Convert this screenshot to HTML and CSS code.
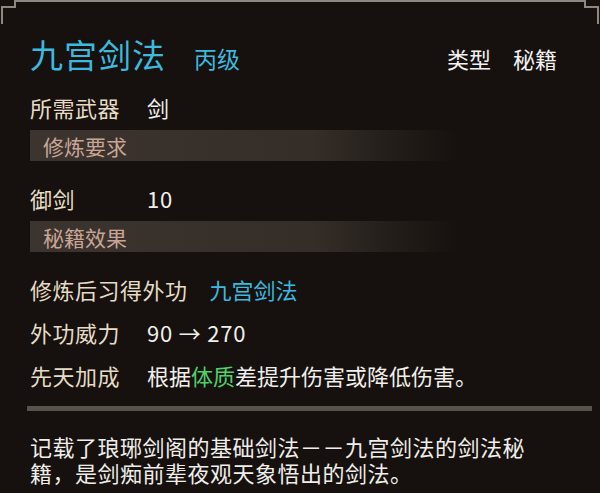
FILE: index.html
```html
<html lang="zh-CN">
<head>
    <meta charset="UTF-8">
    <meta name="viewport" content="width=device-width, initial-scale=1.0">
    <title>九宫剑法</title>
    <link rel="stylesheet" href="styles.css">
</head>
<body>
    <div class="tip">
        <svg class="corner corner-left" width="24" height="26" viewBox="0 0 24 26">
            <path d="M2 24 V7 H15 V1 H24" fill="none" stroke="#8d8780" stroke-width="2"/>
        </svg>
        <svg class="corner corner-right" width="24" height="26" viewBox="0 0 24 26">
            <path d="M0 1 H9 V7 H22 V24" fill="none" stroke="#8d8780" stroke-width="2"/>
        </svg>

        <div class="head">
            <span class="name">九宫剑法</span>
            <span class="grade">丙级</span>
            <span class="kind">类型<span class="gap"></span>秘籍</span>
        </div>

        <div class="row">
            <span class="label">所需武器</span>
            <span class="value">剑</span>
        </div>

        <div class="bar">修炼要求</div>
        <div class="row">
            <span class="label">御剑</span>
            <span class="value num">10</span>
        </div>

        <div class="bar">秘籍效果</div>
        <div class="row">
            <span class="label">修炼后习得外功</span>
            <span class="value skill">九宫剑法</span>
        </div>
        <div class="row">
            <span class="label">外功威力</span>
            <span class="value num">90 → 270</span>
        </div>
        <div class="row">
            <span class="label">先天加成</span>
            <span class="value">根据<span class="attr">体质</span>差提升伤害或降低伤害。</span>
        </div>

        <div class="divider"></div>

        <div class="desc">
            <div class="line">记载了琅琊剑阁的基础剑法－－九宫剑法的剑法秘</div>
            <div class="line">籍，是剑痴前辈夜观天象悟出的剑法。</div>
        </div>
    </div>
</body>
</html>
```

FILE: styles.css
```css
body {
    margin: 0;
    background-color: #16110e;
    font-family: "Noto Sans CJK SC", "DejaVu Sans", sans-serif;
    overflow: hidden;
}
.tip {
    position: relative;
    height: 493px;
    padding: 30px 0 0 30px;
    box-sizing: border-box;
    background-color: #16110e;
}
.tip::before {
    content: "";
    position: absolute;
    top: 0;
    left: 22px;
    right: 22px;
    height: 2px;
    background-color: #8d8780;
}
.corner {
    position: absolute;
    top: 0;
}
.corner-left {
    left: 0;
}
.corner-right {
    right: 0;
}

.head {
    display: flex;
    align-items: baseline;
    height: 52px;
    margin-bottom: 3px;
    padding-right: 43px;
}
.name {
    font-size: 33px;
    color: #3cb9de;
    letter-spacing: 1px;
}
.grade {
    font-size: 23px;
    color: #3cb9de;
    margin-left: 28px;
}
.kind {
    margin-left: auto;
    font-size: 22px;
    color: #f2f2f2;
}
.gap {
    display: inline-block;
    width: 22px;
}

.row {
    display: flex;
    align-items: center;
    height: 43px;
    font-size: 22px;
}
.label {
    color: #e6dcc6;
    min-width: 117px;
    letter-spacing: 0.5px;
}
.value {
    color: #f0efec;
}
.num {
    letter-spacing: 0.8px;
}
.skill {
    margin-left: 22px;
    color: #3cb9de;
}
.attr {
    color: #4fd06a;
}

.bar {
    display: flex;
    align-items: center;
    height: 31px;
    margin: 2px 0 15px;
    padding-left: 13px;
    font-size: 21px;
    color: #c9a596;
    background: linear-gradient(to right, #3c352f 0%, #342d28 50%, #16110e 75%);
}

.divider {
    height: 5px;
    margin: 10px 8px 0 -3px;
    background-color: #57524c;
}
.desc {
    margin-top: 22px;
    font-size: 22px;
    letter-spacing: 0.5px;
    color: #efeeea;
}
.line {
    height: 26px;
    line-height: 26px;
}
```
